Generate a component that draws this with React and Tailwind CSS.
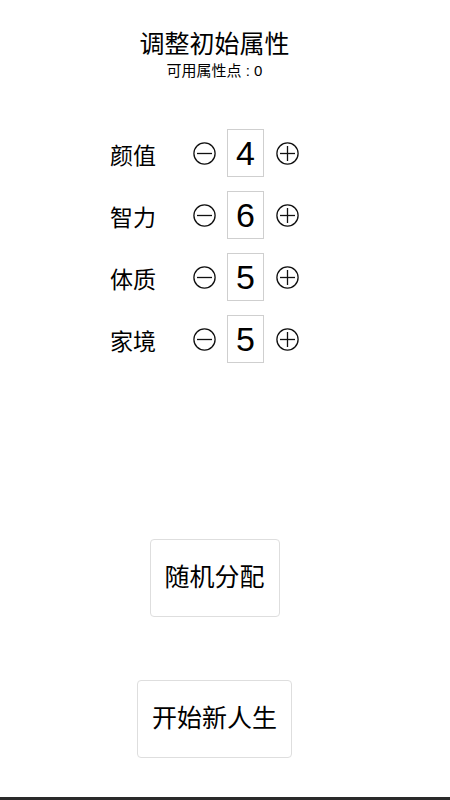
import React, { useState } from "react";

const font = { fontFamily: '"Liberation Sans", "Noto Sans CJK SC", sans-serif' };

const CircleSign = ({ plus = false, onClick }) => (
    <button type="button" onClick={onClick} className="w-[23px] h-[23px] flex items-center justify-center">
        <svg width="23" height="23" viewBox="0 0 23 23" fill="none" stroke="#111" strokeWidth="1.3">
            <circle cx="11.5" cy="11.5" r="10.6" />
            <line x1="4" y1="11.5" x2="19" y2="11.5" />
            {plus && <line x1="11.5" y1="4" x2="11.5" y2="19" />}
        </svg>
    </button>
);

const App = () => {
    const [stats, setStats] = useState([
        { name: "颜值", value: 4 },
        { name: "智力", value: 6 },
        { name: "体质", value: 5 },
        { name: "家境", value: 5 },
    ]);

    const change = (i, d) => {
        setStats(stats.map((s, k) => (k === i ? { ...s, value: s.value + d } : s)));
    };

    return (
        <div className="w-[450px] h-[800px] bg-white text-black flex flex-col overflow-hidden" style={font}>
            <div className="w-[429px] flex-1 flex flex-col items-center">
                <h1 className="mt-[29px] text-[25px] leading-[30px]">调整初始属性</h1>
                <p className="text-[15px] leading-[18px] mt-[3px]">可用属性点 : 0</p>

                <div className="mt-[42px] w-full pl-[110px] flex flex-col">
                    {stats.map((s, i) => (
                        <div key={s.name} className="h-[62px] flex items-center">
                            <span className="w-[44px] whitespace-nowrap text-[23px] leading-none mt-[6px]">{s.name}</span>
                            <div className="ml-[39px]">
                                <CircleSign onClick={() => change(i, -1)} />
                            </div>
                            <div className="ml-[11px] w-[37px] h-[48px] border border-[#cfcfcf] flex items-center justify-center text-[34px]">
                                {s.value}
                            </div>
                            <div className="ml-[12px]">
                                <CircleSign plus onClick={() => change(i, 1)} />
                            </div>
                        </div>
                    ))}
                </div>

                <button type="button" className="mt-[169px] w-[130px] h-[78px] border border-[#dedede] rounded-[4px] text-[25px]">
                    随机分配
                </button>
                <button type="button" className="mt-[63px] w-[155px] h-[78px] border border-[#dedede] rounded-[4px] text-[25px]">
                    开始新人生
                </button>
            </div>
            <div className="h-[3px] bg-[#2a2a2a]" />
        </div>
    );
};

export default App;
